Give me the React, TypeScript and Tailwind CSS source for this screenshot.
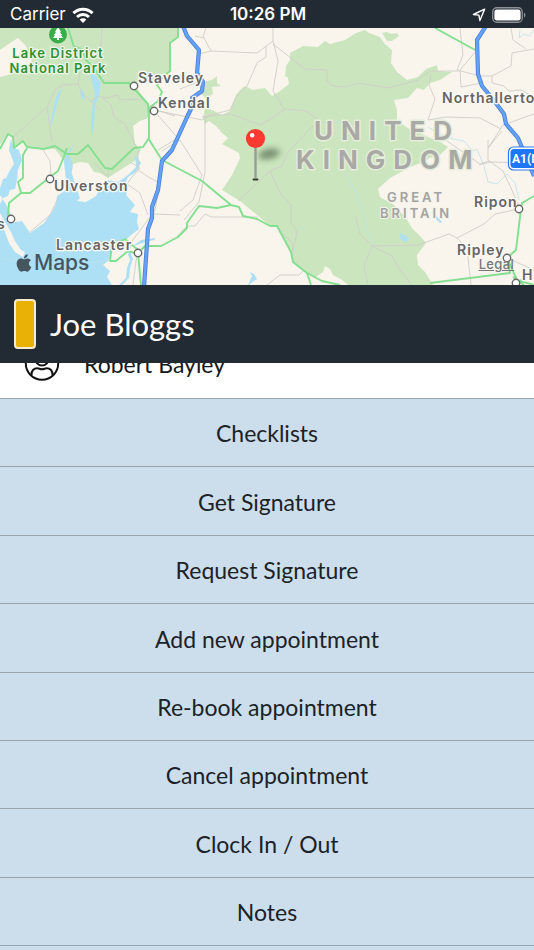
import { FaApple } from 'react-icons/fa'

interface Place {
  name: string
  x: number
  y: number
}

const places: Place[] = [
  { name: 'Staveley', x: 138, y: 83 },
  { name: 'Kendal', x: 158, y: 108 },
  { name: 'Ulverston', x: 54, y: 191 },
  { name: 'Lancaster', x: 56, y: 250 },
  { name: 'Northallerton', x: 442, y: 103 },
  { name: 'Ripon', x: 474, y: 207 },
  { name: 'Ripley', x: 457, y: 255 },
  { name: 's', x: -3, y: 229 },
  { name: 'Harrogate', x: 522, y: 280 },
]

const towns = [
  [134, 86],
  [154, 111],
  [50, 179],
  [11, 219],
  [138, 253],
  [519, 209],
  [507, 258],
  [516, 283],
]

const parks = [
  'M0 28H178V36L170 43V71L160 78L140 83L135 86L147 102L150 108L148 118L140 121L133 126L135 144L141 149L136 160L125 167L108 178L100 173L94 172L88 163L80 162L70 165L64 161L55 149L27 148L23 141L14 147L13 137L8 134L0 145V77L15 73L32 62L26 46L18 38L10 43L0 50Z',
  'M290 53L303 46L318 47L325 41L330 44L345 40L356 33L365 30L369 33L380 37L384 43L392 50L391 63L397 72L407 80L418 77L426 69L437 65L438 71L452 72L440 80L430 83L424 90L417 88L408 98L394 100L397 110L397 122L405 126L411 130L418 132L428 137L440 142L448 147L440 155L430 158L418 164L410 167L390 178L378 189L380 197L394 205L406 218L412 228L420 236L426 243L417 255L418 265L425 272L433 285H348L342 280L333 275L330 269L325 266L323 272L316 277L307 273L293 262L291 252L277 226L270 226L257 215L240 201L222 190L232 175L240 158L239 153L222 144L228 138L222 133L216 126L209 121L205 124L203 118L205 108L212 110L222 115L230 111L236 95L241 89L245 86L253 90L265 88L272 96L280 91L289 84L288 78L285 76L286 66L290 60Z',
  'M382 33L387 32L391 34L397 33L399 36L392 41L387 41Z',
  'M203 82L212 80L217 76L217 83L221 86L212 87L213 94L206 98L201 94L205 88Z',
]

const water = [
  // Morecambe bay
  'M0 204L3 198L8 196L10 190L15 189L17 180L18 170L22 160L19 150L14 148L11 139L9 150L12 158L14 164L10 170L6 178L3 179L0 188V195L7 206L11 215L9 223L22 221L30 233L44 223L52 212L56 204L57 196L66 190L68 180L67 170L72 174L77 190L80 198L77 201L86 202L96 196L98 192L108 187L107 180L118 182L128 175L136 167L135 154L141 163L136 172L128 177L125 184L128 190L126 195L135 205L130 212L138 214L137 222L139 229L131 235L127 239L117 243L112 250L108 261L103 265L110 271L107 277L112 285H0Z',
  'M64 162L66 154L73 145L72 149L68 153L73 165L71 177L66 180L65 171Z',
  'M126 249L130 260L127 268L126 278L119 285H122L129 278L130 268L133 259L129 249L141 240L156 238L154 240L142 243Z',
  'M88 62L94 74L101 83L99 96L95 106L94 127L91 137L91 114L95 93L91 78Z',
  'M62 88L58 101L55 111L52 123L50 125L53 109L57 94Z',
  'M80 88L84 93L85 101L81 97Z',
  'M248 285L252 276L250 272L254 274L257 279L251 283L249 285Z',
  'M400 233L409 238L406 242L401 240Z',
  'M432 211L442 222L440 223L434 217Z',
]

const minorRoads = [
  'M102 28L100 60L80 72L78 84L63 85L55 90L47 107L12 138',
  'M78 84L82 94L91 101L99 96L106 98L118 95L120 100L142 99',
  'M102 98L111 105L114 117L125 124L133 140L137 149',
  'M91 101L100 110M47 107L52 142',
  'M206 28L203 36L211 51L257 53L273 41V28',
  'M195 36L204 38M199 54L211 51M180 89L203 80',
  'M266 46L266 57L257 63L247 86L236 97L230 110L211 115L202 120L154 110',
  'M273 41L278 61L273 91L284 109L306 111L323 123',
  'M273 44L305 69L327 70V81L333 86L345 87L359 83L388 88L418 80L430 71L458 71',
  'M202 117L230 114L261 125L284 110',
  'M205 120V172L199 202L184 220',
  'M162 151L180 140L202 175L193 200L180 211',
  'M155 112L178 138L158 150M156 110L175 116',
  'M313 126L288 152L282 166L270 171L238 201',
  'M270 171L280 193L291 205L291 222L297 232L293 251',
  'M280 232L292 242L293 255M299 275H280L267 285M299 275L303 271',
  'M174 240L187 226H195L205 214L211 217H258',
  'M43 150L50 161L51 176M30 232L50 215L58 198',
  'M138 151V170L150 178L160 183L155 210L133 240L128 250',
  'M130 162L140 168L132 177L127 184L140 193L148 215',
  'M153 214L180 215M94 163L108 177V167',
  'M460 28L463 55L457 70L480 76L492 76L511 66L512 53L534 49',
  'M477 50L460 70L461 87L482 83M492 76V83L504 86L509 91L521 90L534 97',
  'M511 28L513 40L526 49M431 74L429 85L435 99L428 120L446 117L480 118L501 129',
  'M488 148L503 125L534 114',
  'M502 131L488 148M488 140V160L503 171L511 188L519 207',
  'M534 163L490 162L479 165M440 136L480 164L489 161',
  'M519 209L495 214L484 224L457 238L449 234L418 245L372 246L360 234L355 215',
  'M372 246L364 266L368 285M372 246L392 256L400 270L412 285',
  'M457 238L467 248L471 285M507 258L534 270M516 283L529 273',
  'M133 285L137 253',
]

const streams = [
  'M323 123L334 121L360 129M428 127L436 132L453 139L464 141L473 151L477 149L484 166L488 182L497 184L507 174L515 183L519 200',
  'M345 174L355 190L363 211L366 230L374 244M520 30L519 38L524 34L529 36L534 30',
  'M313 126L319 123M0 258L20 262M71 265L112 260M300 230L305 226',
]

const mainRoads = [
  'M178 28V37L170 43V71L162 78L157 85L162 92L158 101L149 108V138L143 147L134 148L112 169L105 168L88 145L78 154H67L55 146L44 149L27 147L23 141L14 148L13 137L8 134L0 149',
  'M68 28L74 47L82 49L86 60L94 68L104 83H129L148 104L149 118',
  'M148 138L162 160L202 181L231 205L239 207L243 216L257 219L270 226H277L291 252L293 262L307 273L322 281L340 285',
  'M231 205L217 208L199 206L187 223V228L178 237L161 246H145L138 253L141 285',
  'M307 273L311 285M67 148L63 159L58 171L50 177L30 193H21L9 203L8 217',
  'M27 148L23 155V178L18 182L21 193M138 250L125 239L112 245L110 261L116 261L128 251L138 254',
  'M435 28L477 51M534 196L522 203L520 217L516 250L507 258L510 273L430 283M507 258L517 280L534 285M513 277L524 285',
]

const motorways = [
  'M183 26L187 36L199 50L197 73L203 82L202 91L192 98L192 107L188 115L172 150L162 161L158 190L152 207L152 218L148 229L144 287',
  'M486 26L477 40L478 74L482 86L492 98L504 114L506 124L518 138L534 176',
]

const actions = [
  'Checklists',
  'Get Signature',
  'Request Signature',
  'Add new appointment',
  'Re-book appointment',
  'Cancel appointment',
  'Clock In / Out',
  'Notes',
]

function StatusBar() {
  return (
    <div className="grid h-7 shrink-0 grid-cols-3 items-center bg-[#222b33] pt-0.5 pr-2 pl-2.5 font-['Inter',sans-serif] text-[17px] text-white">
      <div className="flex items-center gap-1.5">
        <span>Carrier</span>
        <svg viewBox="0 0 22 16" className="h-4 w-[22px]" fill="none" stroke="currentColor" strokeWidth="3">
          <path d="M1.4 6.2C7 0.9 15 0.9 20.6 6.2" />
          <path d="M5 10C8.4 6.8 13.6 6.8 17 10" />
          <path d="M7.6 12.4C9.6 10.7 12.4 10.7 14.4 12.4L11 15.9Z" fill="currentColor" stroke="none" />
        </svg>
      </div>
      <span className="text-center font-semibold">10:26 PM</span>
      <div className="flex items-center justify-end gap-1.5">
        <svg viewBox="0 0 14 14" className="size-3.5" fill="none" stroke="currentColor" strokeWidth="1.4" strokeLinejoin="round">
          <path d="M12.6 1.2L1.4 6.5L6.9 7.1L7.9 12.6Z" />
        </svg>
        <svg viewBox="0 0 34 16" className="h-4 w-[34px]">
          <rect x="0.75" y="0.75" width="29.5" height="14.5" rx="4" fill="none" stroke="#8b9095" strokeWidth="1.3" />
          <rect x="2.4" y="2.4" width="26.2" height="11.2" rx="2.4" fill="#fff" />
          <path d="M32 5.4C33.8 6.2 33.8 9.8 32 10.6Z" fill="#8b9095" />
        </svg>
      </div>
    </div>
  )
}

function MapView() {
  return (
    <section aria-label="Appointment location" className="relative h-[257px] shrink-0 overflow-hidden bg-[#f9f5ed]">
      <svg
        viewBox="0 28 534 257"
        preserveAspectRatio="xMidYMid slice"
        className="size-full font-['Inter',sans-serif]"
        fill="none"
        strokeLinejoin="round"
      >
        <defs>
          <filter id="pin-shadow" x="-50%" y="-100%" width="200%" height="300%">
            <feGaussianBlur stdDeviation="3" />
          </filter>
        </defs>

        {/* Land and water */}
        {parks.map((d) => (
          <path key={d} d={d} fill="#cbe6bf" />
        ))}
        {water.map((d) => (
          <path key={d} d={d} fill="#ade0f5" />
        ))}
        <path d="M0 213L5 222L11 232L15 241L21 250L25 252L23 257L15 252L9 243L5 232L0 222Z" fill="#f9f5ed" />

        {/* Roads */}
        {streams.map((d) => (
          <path key={d} d={d} stroke="#b9e2ea" strokeWidth="0.8" />
        ))}
        {minorRoads.map((d) => (
          <path key={d} d={d} stroke="#cfcdc8" strokeWidth="0.9" />
        ))}
        {mainRoads.map((d) => (
          <path key={d} d={d} stroke="#84df90" strokeWidth="1.9" />
        ))}
        {motorways.map((d) => (
          <path key={d} d={d} stroke="#4a80d8" strokeWidth="4.2" />
        ))}
        {motorways.map((d) => (
          <path key={d} d={d} stroke="#64a2f6" strokeWidth="2.6" />
        ))}

        {/* Labels */}
        <g className="text-[26px] font-bold tracking-[8px]" fill="#a9a9a5" stroke="#e5eddb" strokeWidth="3" paintOrder="stroke">
          <text x="314" y="140">UNITED</text>
          <text x="296" y="169">KINGDOM</text>
        </g>
        <g className="text-[13px] font-semibold tracking-[3px]" fill="#a3a3a1" stroke="#f4f3ea" strokeWidth="2" paintOrder="stroke">
          <text x="387" y="202">GREAT</text>
          <text x="380" y="218">BRITAIN</text>
        </g>
        <g className="text-sm font-semibold tracking-[1px]" fill="#656565" stroke="#fbfaf5" strokeWidth="2.5" paintOrder="stroke">
          {places.map(({ name, x, y }) => (
            <text key={name} x={x} y={y}>{name}</text>
          ))}
        </g>
        <g className="text-[13px] font-semibold tracking-[1px]" fill="#2f9034" stroke="#eef6e8" strokeWidth="2.5" paintOrder="stroke" textAnchor="middle">
          <text x="58" y="58">Lake District</text>
          <text x="58" y="73">National Park</text>
        </g>
        {towns.map(([x, y]) => (
          <circle key={`${x}-${y}`} cx={x} cy={y} r="3.7" fill="#fff" stroke="#666" strokeWidth="1.4" />
        ))}

        {/* Park badge */}
        <circle cx="58" cy="34.5" r="9" fill="#3aad4b" />
        <path d="M58 27L61 32H60L62 35H61L63 38H59V40H57V38H53L55 35H54L56 32H55Z" fill="#fff" />

        {/* Road shield */}
        <rect x="508.5" y="147" width="40" height="23" rx="5" fill="#fff" stroke="#2b79f6" strokeWidth="1.2" />
        <rect x="510.5" y="149" width="38" height="19" rx="3.5" fill="#1e76fb" />
        <text x="512" y="163" fill="#fff" className="font-['Roboto',sans-serif] text-xs font-bold">A1(M)</text>

        {/* Pin */}
        <ellipse cx="269" cy="154" rx="11" ry="5" fill="#3d5136" opacity="0.6" filter="url(#pin-shadow)" transform="rotate(-12 269 154)" />
        <path d="M253.5 179.5H257.5" stroke="#33382f" strokeWidth="1.8" strokeLinecap="round" />
        <path d="M255.5 146V178" stroke="#9b9b9b" strokeWidth="2.4" />
        <circle cx="255.5" cy="138.5" r="9.6" fill="#fd3a30" />
        <circle cx="252.2" cy="135.2" r="2.2" fill="#fff" />
      </svg>

      <div className="absolute bottom-3 left-3.5 flex items-center font-['Inter',sans-serif] text-[21px] leading-none font-medium text-[#45565f]">
        <FaApple className="size-5" />
        <span>Maps</span>
      </div>
      <a href="#legal" className="absolute right-5 bottom-3.5 font-['Inter',sans-serif] text-[13px] leading-none font-medium tracking-wide text-[#777] underline">
        Legal
      </a>
    </section>
  )
}

function ContactRow() {
  return (
    <div className="flex h-[35px] shrink-0 flex-col justify-end overflow-hidden bg-white">
      <div className="flex h-[68px] shrink-0 items-center gap-6 px-6 text-[#14181b]">
        <svg viewBox="0 0 36 36" className="size-9" fill="none" stroke="#111" strokeWidth="2">
          <circle cx="18" cy="17.5" r="16.2" />
          <circle cx="18" cy="13" r="6.5" />
          <path d="M7.5 29C7.5 24.5 10 22.3 13.5 22.3C15 22.3 16 23.2 18 23.2C20 23.2 21 22.3 22.5 22.3C26 22.3 28.5 24.5 28.5 29" />
        </svg>
        <span className="text-[23px]">Robert Bayley</span>
      </div>
    </div>
  )
}

export default function App() {
  return (
    <div className="flex min-h-screen flex-col bg-[#ccdeeb] font-['Lato',sans-serif]">
      <StatusBar />
      <MapView />

      {/* Customer */}
      <header className="flex h-[78px] shrink-0 items-center gap-3.5 bg-[#222b33] px-3.5">
        <span className="h-[50px] w-[22px] rounded-sm border-2 border-[#f6ead0] bg-[#e9b105]" />
        <h1 className="text-[31px] text-white">Joe Bloggs</h1>
      </header>

      <ContactRow />

      {/* Actions */}
      <ul className="grid flex-1 auto-rows-fr border-b border-[#9aa4ab]">
        {actions.map((action) => (
          <li key={action} className="flex border-t border-[#9aa4ab]">
            <button type="button" className="min-h-16 w-full cursor-pointer pt-0.5 text-[23px] text-[#1b2228] hover:bg-[#bfd4e3]">
              {action}
            </button>
          </li>
        ))}
      </ul>
      <div className="h-1 shrink-0" />
    </div>
  )
}
